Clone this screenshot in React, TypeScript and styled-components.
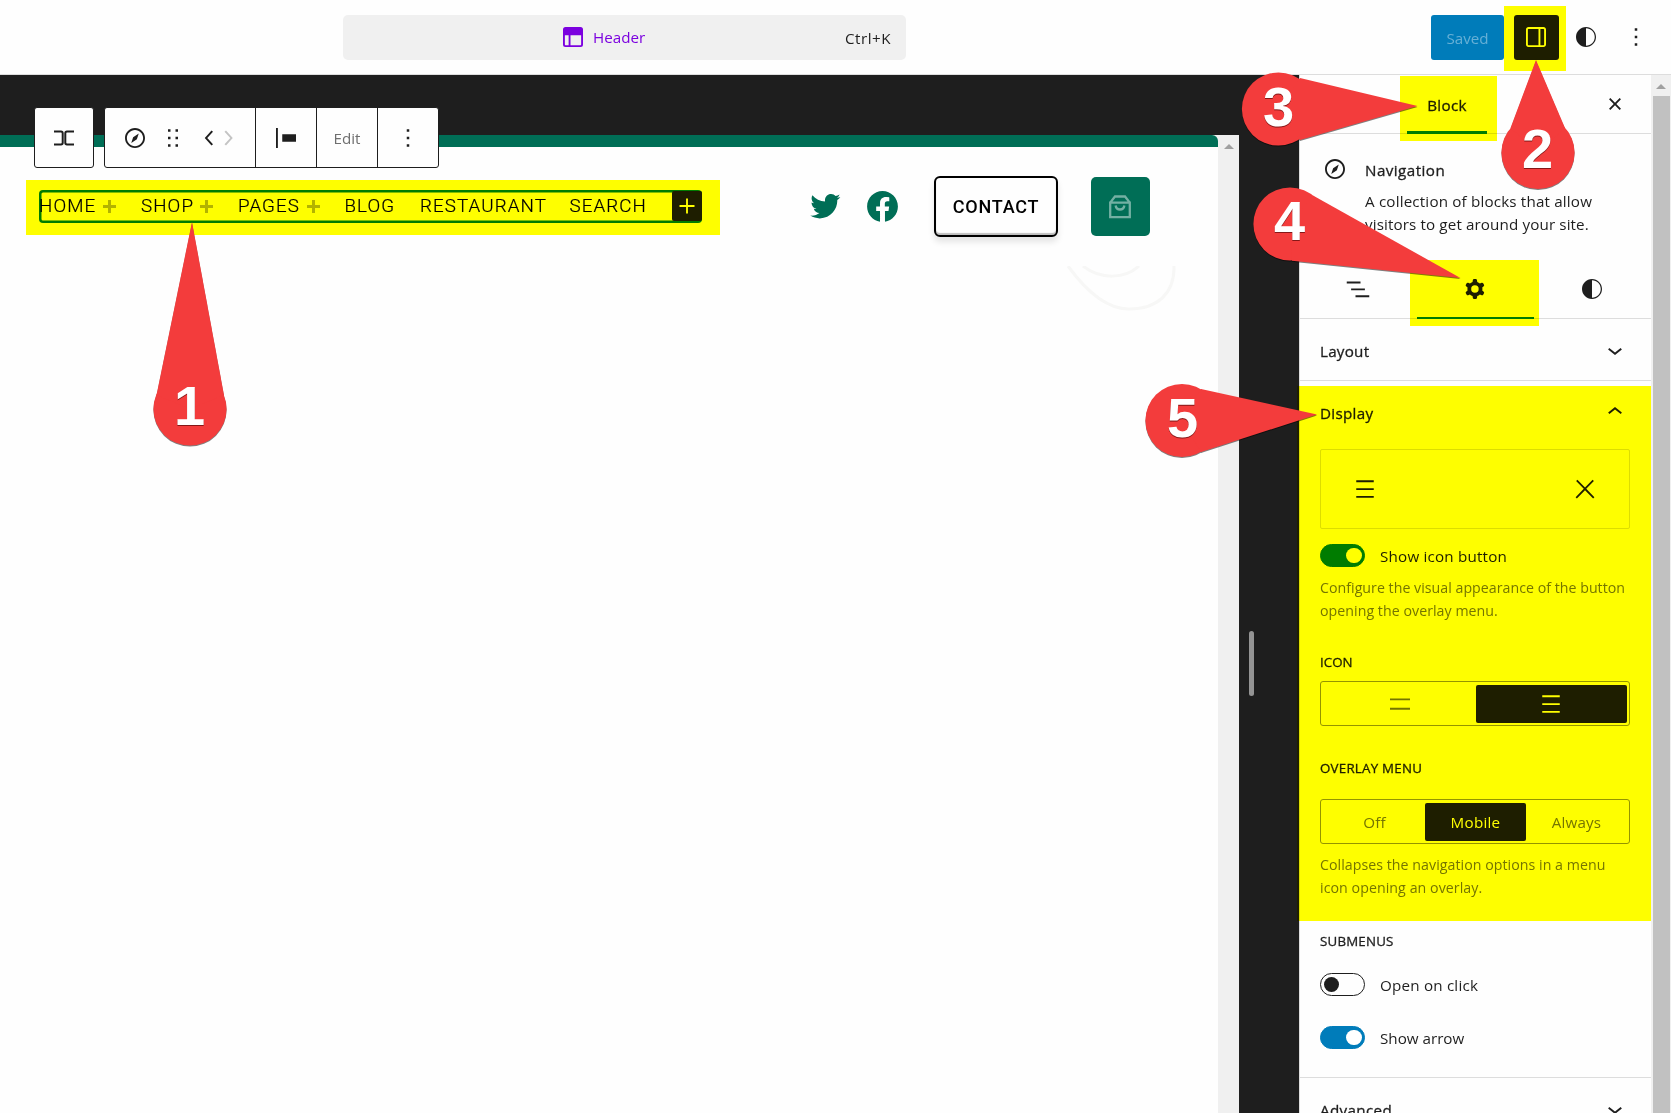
import React from "react";
import styled, { createGlobalStyle } from "styled-components";

const UI = `"Open Sans", "Noto Sans", sans-serif`;
const INK = "#1e1e1e";
const BLUE = "#007cba";
const GREEN = "#006e56";

const GlobalStyle = createGlobalStyle`
  *, *::before, *::after { box-sizing: border-box; }
  body { margin: 0; background: #fefefe; overflow: hidden; }
  button { font: inherit; color: inherit; background: none; border: 0; padding: 0; margin: 0; }
  svg { display: block; flex: none; }
`;

const Screen = styled.div`
  position: relative;
  width: 1671px;
  height: 1113px;
  overflow: hidden;
  display: flex;
  flex-direction: column;
  background: #fefefe;
  color: ${INK};
  font-family: ${UI};
  font-size: 15.2px;
`;

const Label = styled.span<{ $ls?: number; $color?: string }>`
  letter-spacing: ${(p) => p.$ls ?? 0}px;
  color: ${(p) => p.$color ?? "inherit"};
  white-space: nowrap;
`;
const StrongLabel = styled(Label)`
  -webkit-text-stroke: 0.3px currentColor;
`;

/* ---------- icons ---------- */
const paths = {
  compass:
    "M12 4c-4.4 0-8 3.6-8 8s3.6 8 8 8 8-3.6 8-8-3.6-8-8-8zm0 14.5c-3.6 0-6.5-2.9-6.5-6.5S8.4 5.5 12 5.5s6.5 2.9 6.5 6.5-2.9 6.5-6.5 6.5zM9 16l4.5-3L15 8.4l-4.5 3L9 16z",
  more: "M13 19h-2v-2h2v2zm0-6h-2v-2h2v2zm0-6h-2V5h2v2z",
  layout:
    "M18.5 10.5H10v8h8a.5.5 0 00.5-.5v-7.5zm-10 0h-3V18a.5.5 0 00.5.5h2.5v-8zM6 4h12a2 2 0 012 2v12a2 2 0 01-2 2H6a2 2 0 01-2-2V6a2 2 0 012-2z",
  drawer:
    "M18 4H6c-1.1 0-2 .9-2 2v12c0 1.1.9 2 2 2h12c1.1 0 2-.9 2-2V6c0-1.1-.9-2-2-2zm-4 14.5H6c-.3 0-.5-.2-.5-.5V6c0-.3.2-.5.5-.5h8v13zm4.5-.5c0 .3-.2.5-.5.5h-2.5v-13H18c.3 0 .5.2.5.5v12z",
  styles: "M12 4c-4.4 0-8 3.6-8 8s3.6 8 8 8 8-3.6 8-8-3.6-8-8-8zm0 15V5c3.9 0 7 3.1 7 7s-3.1 7-7 7z",
  closeSmall:
    "M12 13.06l3.712 3.713 1.061-1.06L13.061 12l3.712-3.712-1.06-1.06L12 10.938 8.288 7.227l-1.061 1.06L10.939 12l-3.712 3.712 1.06 1.061L12 13.061z",
  gear: "M10.289 4.836A1 1 0 0111.275 4h1.306a1 1 0 01.987.836l.244 1.466c.787.26 1.503.679 2.108 1.218l1.393-.522a1 1 0 011.216.437l.653 1.13a1 1 0 01-.23 1.273l-1.148.944a6.025 6.025 0 010 2.435l1.149.946a1 1 0 01.23 1.272l-.653 1.13a1 1 0 01-1.216.437l-1.394-.522c-.605.54-1.32.958-2.108 1.218l-.244 1.466a1 1 0 01-.987.836h-1.306a1 1 0 01-.986-.836l-.244-1.466a5.995 5.995 0 01-2.108-1.218l-1.394.522a1 1 0 01-1.217-.436l-.653-1.131a1 1 0 01.23-1.272l1.149-.946a6.026 6.026 0 010-2.435l-1.148-.944a1 1 0 01-.23-1.272l.653-1.131a1 1 0 011.217-.437l1.393.522a5.994 5.994 0 012.108-1.218l.244-1.466zM14.929 12a3 3 0 11-6 0 3 3 0 016 0z",
  list: "M3 6h11v1.5H3V6Zm3.5 5.5h11V13h-11v-1.5ZM21 17H10v1.5h11V17Z",
  down: "M17.5 11.6L12 16l-5.5-4.4.9-1.2L12 14l4.5-3.6 1 1.2z",
  up: "M6.5 12.4L12 8l5.5 4.4-.9 1.2L12 10l-4.5 3.6-1-1.2z",
  drag: "M8 7h2V5H8v2zm0 6h2v-2H8v2zm0 6h2v-2H8v2zm6-14v2h2V5h-2zm0 8h2v-2h-2v2zm0 6h2v-2h-2v2z",
  justify: "M9 9v6h11V9H9zM4 20h1.5V4H4v16z",
  left: "M14.6 7l-1.2-1L8 12l5.4 6 1.2-1-4.6-5z",
  right: "M10.6 6L9.4 7l4.6 5-4.6 5 1.2 1 5.4-6z",
  menu: "M5 5v1.5h14V5H5zm0 7.8h14v-1.5H5v1.5zM5 19h14v-1.5H5V19z",
  twoLines: "M4 7.5h16V9H4zM4 15h16v1.5H4z",
  close: "M13 11.8l6.1-6.3-1-1-6.1 6.2-6.1-6.2-1 1 6.1 6.3-6.5 6.7 1 1 6.5-6.6 6.5 6.6 1-1z",
  plus: "M11.25 12.75V18h1.5v-5.25H18v-1.5h-5.25V6h-1.5v5.25H6v1.5z",
  twitter:
    "M22.23,5.924c-0.736,0.326-1.527,0.547-2.357,0.646c0.847-0.508,1.498-1.312,1.804-2.27 c-0.793,0.47-1.671,0.812-2.606,0.996C18.324,4.498,17.257,4,16.077,4c-2.266,0-4.103,1.837-4.103,4.103 c0,0.322,0.036,0.635,0.106,0.935C8.67,8.867,5.647,7.234,3.623,4.751C3.27,5.357,3.067,6.062,3.067,6.814 c0,1.424,0.724,2.679,1.825,3.415c-0.673-0.021-1.305-0.206-1.859-0.513c0,0.017,0,0.034,0,0.052c0,1.988,1.414,3.647,3.292,4.023 c-0.344,0.094-0.707,0.144-1.081,0.144c-0.264,0-0.521-0.026-0.772-0.074c0.522,1.63,2.038,2.816,3.833,2.85 c-1.404,1.1-3.174,1.756-5.096,1.756c-0.331,0-0.658-0.019-0.979-0.057c1.816,1.164,3.973,1.843,6.29,1.843 c7.547,0,11.675-6.252,11.675-11.675c0-0.178-0.004-0.355-0.012-0.531C20.985,7.47,21.68,6.747,22.23,5.924z",
  facebook:
    "M12 2C6.5 2 2 6.5 2 12c0 5 3.7 9.1 8.4 9.9v-7H7.9V12h2.5V9.8c0-2.5 1.5-3.9 3.8-3.9 1.1 0 2.2.2 2.2.2v2.5h-1.3c-1.2 0-1.6.8-1.6 1.6V12h2.8l-.4 2.9h-2.3v7C18.3 21.1 22 17 22 12c0-5.5-4.5-10-10-10z",
};

function Icon({ name, size = 30, color = "currentColor", narrow = false }: { name: keyof typeof paths; size?: number; color?: string; narrow?: boolean }) {
  return (
    <svg width={narrow ? (size * 14) / 24 : size} height={size} viewBox={narrow ? "5 0 14 24" : "0 0 24 24"} fill={color}>
      <path fillRule="evenodd" clipRule="evenodd" d={paths[name]} />
    </svg>
  );
}

/* ---------- top bar ---------- */
const TopBar = styled.header`
  flex: none;
  height: 75px;
  border-bottom: 1px solid #ddd;
  display: flex;
  align-items: flex-start;
  padding: 15px 20px 0 343px;
`;
const CommandBar = styled.div`
  width: 563px;
  height: 45px;
  border-radius: 5px;
  background: #f0f0f0;
  display: flex;
  align-items: center;
  justify-content: space-between;
  padding: 0 15px 1px 215px;
`;
const DocTitle = styled.div`
  display: flex;
  align-items: center;
  gap: 5px;
  color: #7b00df;
`;
const Shortcut = styled.div`
  padding-top: 2px;
`;
const Actions = styled.div`
  margin-left: auto;
  display: flex;
  align-items: center;
`;
const SavedButton = styled.button`
  width: 73px;
  height: 45px;
  border-radius: 3px;
  background: ${BLUE};
  color: #66b0d6;
`;
const ToggleSidebar = styled.button`
  width: 45px;
  height: 45px;
  margin-left: 10px;
  padding: 0 1px 1px 0;
  border-radius: 3px;
  background: ${INK};
  color: #fff;
  display: grid;
  place-items: center;
`;
const IconAction = styled.button<{ $ml: number }>`
  margin-left: ${(p) => p.$ml}px;
  padding-bottom: 1px;
`;

/* ---------- canvas ---------- */
const Body = styled.div`
  flex: 1;
  min-height: 0;
  display: flex;
`;
const Canvas = styled.main`
  width: 1299px;
  flex: none;
  background: ${INK};
  padding-top: 60px;
  display: flex;
`;
const Frame = styled.div`
  width: 1239px;
  display: flex;
  background: #f0f0f0;
  border-top-right-radius: 3px;
`;
const Site = styled.div`
  width: 1218px;
  background: #fefefe;
  border-top-right-radius: 6px;
  overflow: hidden;
`;
const SiteStripe = styled.div`
  height: 12px;
  background: ${GREEN};
`;
const SiteHeader = styled.div`
  height: 119px;
  padding-left: 39px;
  display: flex;
  align-items: center;
`;
const NavBlock = styled.nav`
  width: 663px;
  height: 33px;
  padding-bottom: 1px;
  margin-bottom: 1px;
  display: flex;
  align-items: center;
  border-radius: 4px;
  box-shadow: inset 0 0 0 2.5px ${BLUE};
  font-family: Roboto, sans-serif;
  font-size: 18.75px;
  font-weight: 300;
  color: #000;
  -webkit-text-stroke: 0.2px #000;
`;
const NavItem = styled.div<{ $w: number }>`
  width: ${(p) => p.$w}px;
  display: flex;
  align-items: center;
  justify-content: space-between;
  flex: none;
  padding-right: 25px;
`;
const SubmenuPlus = styled.span`
  width: 13px;
  height: 13px;
  margin-top: 2px;
  background:
    linear-gradient(#b3b3b3, #b3b3b3) center / 13px 3px no-repeat,
    linear-gradient(#b3b3b3, #b3b3b3) center / 3px 13px no-repeat;
`;
const Inserter = styled.button`
  margin-left: auto;
  width: 30px;
  height: 30px;
  border-radius: 2px;
  background: ${INK};
  color: #fff;
`;
const Social = styled.div`
  display: flex;
  gap: 21px;
  margin-left: 105px;
`;
const Contact = styled.button`
  width: 124px;
  height: 61px;
  margin-left: 33px;
  border: 2px solid #000;
  border-radius: 6px;
  background: #fefefe;
  box-shadow: 0 5px 6px rgba(0, 0, 0, 0.1), inset 0 -2px 1px rgba(0, 0, 0, 0.25);
  font-family: Roboto, sans-serif;
  font-size: 18px;
  font-weight: 500;
  color: #000;
`;
const Cart = styled.button`
  width: 59px;
  height: 59px;
  margin-left: 33px;
  padding-right: 1px;
  border-radius: 5px;
  background: ${GREEN};
  display: grid;
  place-items: center;
`;
const Ornament = styled.div`
  padding-left: 1059px;
`;
const ScrollTrack = styled.div<{ $w: number; $top: number }>`
  width: ${(p) => p.$w}px;
  flex: none;
  background: #f0f0f0;
  display: flex;
  flex-direction: column;
  align-items: center;
  padding-top: ${(p) => p.$top}px;
`;
const ArrowUp = styled.span`
  border: 5px solid transparent;
  border-top: 0;
  border-bottom-color: #a0a0a0;
`;
const Thumb = styled.div`
  width: 17px;
  flex: 1;
  margin-top: 7px;
  background: #c1c1c1;
`;
const Resizer = styled.div`
  width: 5px;
  height: 65px;
  margin: 496px 0 0 10px;
  border-radius: 3px;
  background: #949494;
`;

const BlockToolbar = styled.div`
  position: absolute;
  left: 34px;
  top: 107px;
  display: flex;
  gap: 10px;
`;
const ToolbarBox = styled.div`
  height: 61px;
  border: 1px solid ${INK};
  border-radius: 3px;
  background: #fefefe;
  display: flex;
`;
const ToolGroup = styled.div<{ $w: number; $last?: boolean }>`
  width: ${(p) => p.$w}px;
  border-right: ${(p) => (p.$last ? 0 : 1)}px solid ${INK};
  display: flex;
  align-items: center;
  justify-content: center;
`;
const ParentTools = styled(ToolGroup)`
  justify-content: flex-start;
  padding-left: 15px;
  gap: 8px;
`;
const Movers = styled.div`
  display: flex;
  margin-left: 5px;
`;

/* ---------- sidebar ---------- */
const Sidebar = styled.aside`
  width: 352px;
  flex: none;
  border-left: 1px solid #ddd;
  background: #fefefe;
  overflow: hidden;
`;
const SidebarHead = styled.div`
  height: 59px;
  border-bottom: 1px solid #ddd;
  padding: 0 21px 0 107px;
  display: flex;
  justify-content: space-between;
  align-items: center;
`;
const BlockTab = styled.div`
  width: 80px;
  height: 59px;
  border-bottom: 3px solid ${BLUE};
  padding-top: 5px;
  display: flex;
  align-items: center;
  justify-content: center;
`;
const Card = styled.div`
  display: flex;
  gap: 15px;
  padding: 25px 20px 24px;
`;
const CardIcon = styled.div`
  margin-top: -5px;
`;
const CardText = styled.div`
  display: flex;
  flex-direction: column;
  line-height: 23px;
`;
const CardTitle = styled.div`
  margin-bottom: 8px;
`;
const SubTabs = styled.div`
  height: 59px;
  border-bottom: 1px solid #ddd;
  display: grid;
  grid-template-columns: repeat(3, 1fr);
`;
const SubTab = styled.div<{ $on?: boolean }>`
  height: 59px;
  padding: 0 1px 1px 0;
  display: grid;
  place-items: center;
  box-shadow: ${(p) => (p.$on ? `inset 0 -2px 0 ${BLUE}` : "none")};
`;
const PanelTitle = styled.div<{ $h: number; $shift?: number }>`
  height: ${(p) => p.$h}px;
  padding: ${(p) => p.$shift ?? 0}px 0 0;
  display: flex;
  align-items: center;
  justify-content: space-between;
`;
const Chevron = styled.div<{ $up?: boolean }>`
  margin-top: ${(p) => (p.$up ? -3 : -2)}px;
`;
const Panel = styled.section`
  padding: 0 21px 0 20px;
  border-bottom: 1px solid #ddd;
`;
const IconPreview = styled.div`
  height: 80px;
  margin-top: 4px;
  padding: 0 29px;
  border: 1px solid #ddd;
  border-radius: 2px;
  display: flex;
  align-items: center;
  justify-content: space-between;
`;
const ToggleRow = styled.label<{ $mt: number }>`
  margin-top: ${(p) => p.$mt}px;
  height: 23px;
  display: flex;
  align-items: center;
  gap: 15px;
`;
const Switch = styled.span<{ $on?: boolean }>`
  width: 45px;
  height: 23px;
  border-radius: 12px;
  border: 1.3px solid ${(p) => (p.$on ? BLUE : INK)};
  background: ${(p) => (p.$on ? BLUE : "#fefefe")};
  padding: 0 2.5px;
  display: flex;
  align-items: center;
  justify-content: ${(p) => (p.$on ? "flex-end" : "flex-start")};
  &::after {
    content: "";
    width: 15.5px;
    height: 15.5px;
    border-radius: 50%;
    background: ${(p) => (p.$on ? "#fff" : INK)};
  }
`;
const Help = styled.p<{ $mt: number }>`
  margin: ${(p) => p.$mt}px 0 0;
  font-size: 14.2px;
  line-height: 22.5px;
  color: #757575;
  display: flex;
  flex-direction: column;
`;
const Caption = styled.div<{ $mt: number }>`
  margin-top: ${(p) => p.$mt}px;
  height: 20px;
  font-size: 13.3px;
  line-height: 20px;
`;
const Segmented = styled.div<{ $mt: number }>`
  margin-top: ${(p) => p.$mt}px;
  height: 45px;
  border: 1px solid #949494;
  border-radius: 3px;
  padding: 3px 2px 2px 3px;
  display: grid;
  grid-auto-flow: column;
  grid-auto-columns: 1fr;
`;
const Segment = styled.button<{ $on?: boolean }>`
  border-radius: 2px;
  background: ${(p) => (p.$on ? INK : "transparent")};
  color: ${(p) => (p.$on ? "#fff" : "#757575")};
  display: flex;
  align-items: center;
  justify-content: center;
`;
const EndSpace = styled.div`
  height: 28px;
`;

/* ---------- annotations ---------- */
const Highlight = styled.div<{ $x: number; $y: number; $w: number; $h: number }>`
  position: absolute;
  left: ${(p) => p.$x}px;
  top: ${(p) => p.$y}px;
  width: ${(p) => p.$w}px;
  height: ${(p) => p.$h}px;
  background: #ffff00;
  mix-blend-mode: multiply;
`;
const PinLayer = styled.svg`
  position: absolute;
  inset: 0;
  font-family: "Liberation Sans", Arial, sans-serif;
  font-weight: 700;
  font-size: 56px;
  .body { fill: #f33c3c; filter: drop-shadow(0.5px 1px 0.6px rgba(0, 0, 0, 0.5)); }
  text { fill: #fff; filter: drop-shadow(0.6px 1px 0.4px rgba(60, 0, 0, 0.6)); }
`;

const pins = [
  { n: 1, c: [190, 409], tip: [192, 222], a: [156.5, 395], b: [224, 395], t: [174, 425] },
  { n: 2, c: [1538, 152.5], tip: [1536, 60], a: [1510.5, 128], b: [1565, 128], t: [1522, 168] },
  { n: 3, c: [1278.5, 109], tip: [1417.5, 106], a: [1300, 78], b: [1300, 140], t: [1263, 126] },
  { n: 4, c: [1290, 224], tip: [1460.5, 278], a: [1313, 195.5], b: [1292, 260.7], t: [1274, 240] },
  { n: 5, c: [1182, 420.5], tip: [1317, 414.5], a: [1201, 389], b: [1201, 452], t: [1167, 437] },
];

const navItems = [
  { text: "HOME", w: 102, sub: true },
  { text: "SHOP", w: 97, sub: true },
  { text: "PAGES", w: 106.5, sub: true },
  { text: "BLOG", w: 75.5 },
  { text: "RESTAURANT", w: 149.5 },
  { text: "SEARCH", w: 90 },
];

export default function App() {
  return (
    <Screen>
      <GlobalStyle />
      <TopBar>
        <CommandBar>
          <DocTitle>
            <Icon name="layout" />
            <Label>Header</Label>
          </DocTitle>
          <Shortcut>
            <Label $ls={0.5}>Ctrl+K</Label>
          </Shortcut>
        </CommandBar>
        <Actions>
          <SavedButton>
            <Label>Saved</Label>
          </SavedButton>
          <ToggleSidebar>
            <Icon name="drawer" />
          </ToggleSidebar>
          <IconAction $ml={12}>
            <Icon name="styles" />
          </IconAction>
          <IconAction $ml={20}>
            <Icon name="more" />
          </IconAction>
        </Actions>
      </TopBar>

      <Body>
        <Canvas>
          <Frame>
            <Site>
              <SiteStripe />
              <SiteHeader>
                <NavBlock>
                  {navItems.map((item) => (
                    <NavItem key={item.text} $w={item.w}>
                      <Label $ls={1.1}>{item.text}</Label>
                      {item.sub && <SubmenuPlus />}
                    </NavItem>
                  ))}
                  <Inserter>
                    <Icon name="plus" />
                  </Inserter>
                </NavBlock>
                <Social>
                  <Icon name="twitter" size={36} color={GREEN} />
                  <Icon name="facebook" size={37} color={GREEN} />
                </Social>
                <Contact>
                  <Label $ls={0.8}>CONTACT</Label>
                </Contact>
                <Cart>
                  <svg width="24" height="26" viewBox="0 0 24 26" fill="none" stroke="#73b0a3" strokeWidth="2.3">
                    <path d="M2.2 8.6v14.6h19.6V8.6zM2.2 8.6L7 2.500h10l4.8 6.100" />
                    <path d="M7.6 11.5c.4 2.6 2 4 4.4 4s4-1.400 4.400-4" />
                  </svg>
                </Cart>
              </SiteHeader>
              <Ornament>
                <svg width="130" height="50" viewBox="0 0 130 50" fill="none" stroke="#f7f7f6" strokeWidth="3">
                  <path d="M9 0C25 22 47 43 70 43c28 0 46-15 45-44" />
                  <path d="M24 0c18 14 42 13 56 0" />
                </svg>
              </Ornament>
            </Site>
            <ScrollTrack $w={21} $top={9}>
              <ArrowUp />
            </ScrollTrack>
          </Frame>
          <Resizer />
        </Canvas>

        <Sidebar>
          <SidebarHead>
            <BlockTab>
              <StrongLabel $ls={0.3}>Block</StrongLabel>
            </BlockTab>
            <Icon name="closeSmall" />
          </SidebarHead>
          <Card>
            <CardIcon>
              <Icon name="compass" />
            </CardIcon>
            <CardText>
              <CardTitle>
                <StrongLabel $ls={0.45}>Navigation</StrongLabel>
              </CardTitle>
              <Label $ls={0.17}>A collection of blocks that allow</Label>
              <Label $ls={0.12}>visitors to get around your site.</Label>
            </CardText>
          </Card>
          <SubTabs>
            <SubTab>
              <Icon name="list" />
            </SubTab>
            <SubTab $on>
              <Icon name="gear" />
            </SubTab>
            <SubTab>
              <Icon name="styles" />
            </SubTab>
          </SubTabs>
          <Panel>
            <PanelTitle $h={61} $shift={2}>
              <StrongLabel $ls={0.25}>Layout</StrongLabel>
              <Chevron>
                <Icon name="down" />
              </Chevron>
            </PanelTitle>
          </Panel>
          <Panel>
            <PanelTitle $h={64}>
              <StrongLabel $ls={0.3}>Display</StrongLabel>
              <Chevron $up>
                <Icon name="up" />
              </Chevron>
            </PanelTitle>
            <IconPreview>
              <Icon name="menu" />
              <Icon name="close" />
            </IconPreview>
            <ToggleRow $mt={15}>
              <Switch $on />
              <Label $ls={0.2}>Show icon button</Label>
            </ToggleRow>
            <Help $mt={10}>
              <Label $ls={0.02}>Configure the visual appearance of the button</Label>
              <Label $ls={0.04}>opening the overlay menu.</Label>
            </Help>
            <Caption $mt={30}>
              <StrongLabel $ls={0.05}>ICON</StrongLabel>
            </Caption>
            <Segmented $mt={9}>
              <Segment>
                <Icon name="twoLines" />
              </Segment>
              <Segment $on>
                <Icon name="menu" />
              </Segment>
            </Segmented>
            <Caption $mt={32}>
              <StrongLabel $ls={0.25}>OVERLAY MENU</StrongLabel>
            </Caption>
            <Segmented $mt={21}>
              <Segment>
                <Label $ls={0.1}>Off</Label>
              </Segment>
              <Segment $on>
                <Label $ls={0.25}>Mobile</Label>
              </Segment>
              <Segment>
                <Label $ls={0.15}>Always</Label>
              </Segment>
            </Segmented>
            <Help $mt={10}>
              <Label $ls={0.04}>Collapses the navigation options in a menu</Label>
              <Label $ls={0.06}>icon opening an overlay.</Label>
            </Help>
            <Caption $mt={32}>
              <StrongLabel $ls={0.2}>SUBMENUS</StrongLabel>
            </Caption>
            <ToggleRow $mt={22}>
              <Switch />
              <Label $ls={0.2}>Open on click</Label>
            </ToggleRow>
            <ToggleRow $mt={30}>
              <Switch $on />
              <Label>Show arrow</Label>
            </ToggleRow>
            <EndSpace />
          </Panel>
          <Panel>
            <PanelTitle $h={61} $shift={3}>
              <StrongLabel $ls={0.35}>Advanced</StrongLabel>
              <Chevron>
                <Icon name="down" />
              </Chevron>
            </PanelTitle>
          </Panel>
        </Sidebar>
        <ScrollTrack $w={20} $top={9}>
          <ArrowUp />
          <Thumb />
        </ScrollTrack>
      </Body>

      <BlockToolbar>
        <ToolbarBox>
          <ToolGroup $w={58} $last>
            <svg width="22" height="16" viewBox="0 0 22 16" fill="none" stroke={INK} strokeWidth="2">
              <path d="M1 1.500h7q1.700 0 1.700 1.700v9.600q0 1.700-1.700 1.700H1M21 1.500h-7q-1.700 0-1.700 1.700v9.600q0 1.700 1.700 1.700h7" />
            </svg>
          </ToolGroup>
        </ToolbarBox>
        <ToolbarBox>
          <ParentTools $w={151}>
            <Icon name="compass" />
            <Icon name="drag" />
            <Movers>
              <Icon name="left" narrow />
              <Icon name="right" narrow color="#c4c4c4" />
            </Movers>
          </ParentTools>
          <ToolGroup $w={61}>
            <Icon name="justify" />
          </ToolGroup>
          <ToolGroup $w={61}>
            <Label $color="#6f6f6f">Edit</Label>
          </ToolGroup>
          <ToolGroup $w={60} $last>
            <Icon name="more" />
          </ToolGroup>
        </ToolbarBox>
      </BlockToolbar>

      <Highlight $x={26} $y={180} $w={694} $h={55} />
      <Highlight $x={1504} $y={6} $w={62} $h={65} />
      <Highlight $x={1400} $y={76} $w={97} $h={65} />
      <Highlight $x={1410} $y={260} $w={129} $h={66} />
      <Highlight $x={1297} $y={386} $w={354} $h={535} />

      <PinLayer width="1671" height="1113" viewBox="0 0 1671 1113">
        {pins.map((p) => (
          <g key={p.n}>
            <g className="body">
              <circle cx={p.c[0]} cy={p.c[1]} r="36.6" />
              <polygon points={`${p.tip} ${p.a} ${p.c} ${p.b}`} />
            </g>
            <text x={p.t[0]} y={p.t[1]}>
              {p.n}
            </text>
          </g>
        ))}
      </PinLayer>
    </Screen>
  );
}
